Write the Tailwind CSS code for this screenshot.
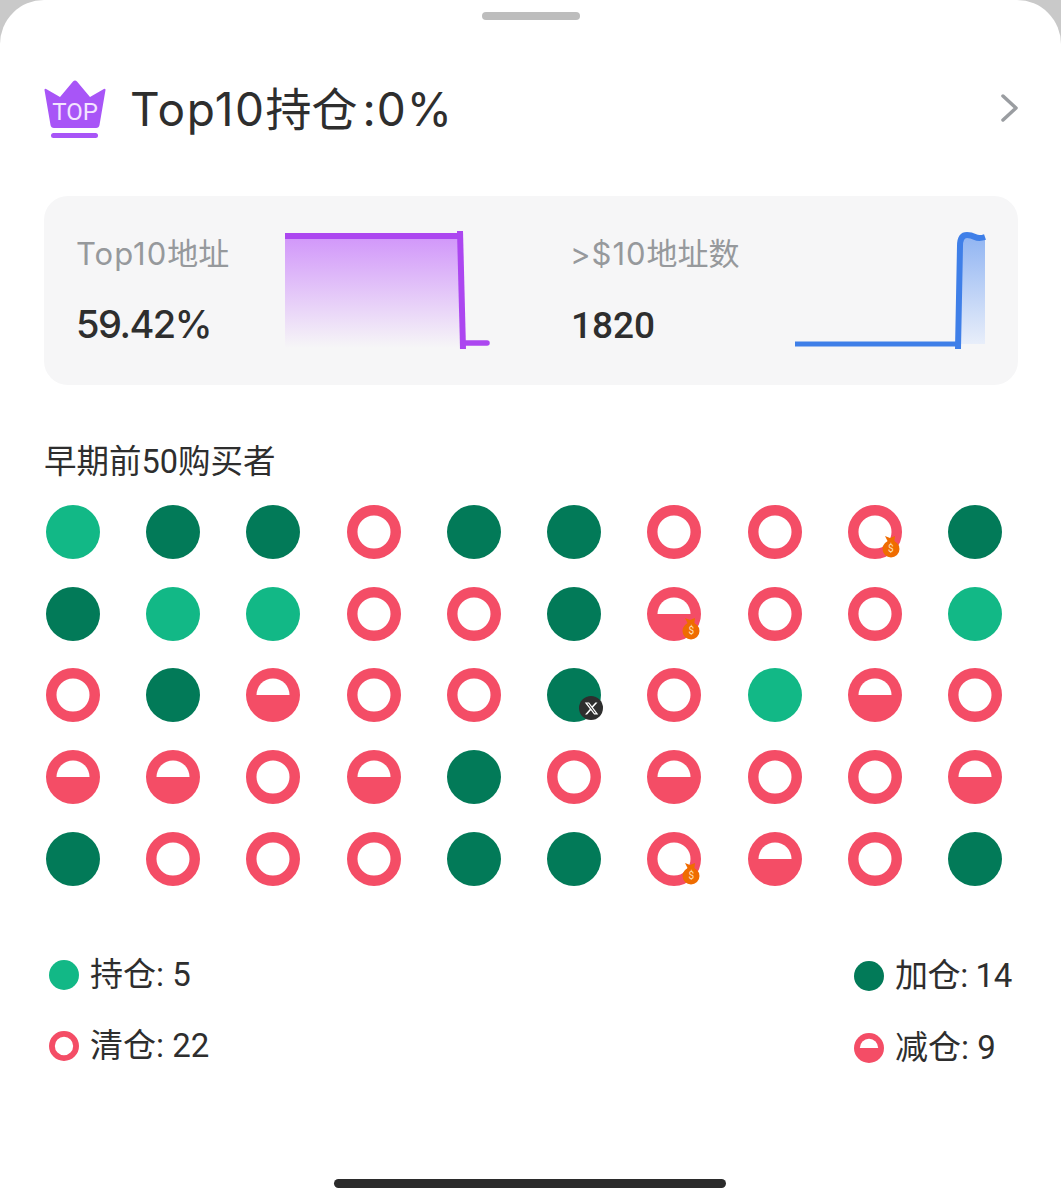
<!DOCTYPE html>
<html lang="zh">
<head>
    <meta charset="UTF-8">
    <meta name="viewport" content="width=device-width, initial-scale=1.0">
    <title>Top10持仓</title>
    <script src="https://cdn.jsdelivr.net/npm/@tailwindcss/browser@4"></script>
</head>
<body class="bg-[#c9c9c9] font-['Roboto','Noto_Sans_CJK_SC',sans-serif] text-[#2e2e2e]">

    <!-- shared dots -->
    <svg class="hidden" xmlns="http://www.w3.org/2000/svg">
        <symbol id="hold" viewBox="0 0 54 54"><circle cx="27" cy="27" r="27" fill="#12b886"/></symbol>
        <symbol id="add" viewBox="0 0 54 54"><circle cx="27" cy="27" r="27" fill="#027a58"/></symbol>
        <symbol id="clear" viewBox="0 0 54 54"><circle cx="27" cy="27" r="21.750" fill="none" stroke="#f44d66" stroke-width="10.500"/></symbol>
        <symbol id="half" viewBox="0 0 54 54"><circle cx="27" cy="27" r="27" fill="#f44d66"/><path d="M10.500 27a16.500 16.500 0 0 1 33 0z" fill="#fff"/></symbol>
        <symbol id="bag" viewBox="0 0 20 24"><path d="M4 1l5 2 5-2-1 8H8z" fill="#ef6c00"/><circle cx="10" cy="14" r="8.5" fill="#ef6c00"/></symbol>
    </svg>

    <div class="relative w-[1061px] h-[1200px] bg-white rounded-t-[44px] overflow-hidden flex flex-col">
        <!-- drag handle -->
        <div class="mt-3 mx-auto w-[98px] h-2 rounded-full bg-[#bdbdbd]"></div>

        <!-- header -->
        <div class="mt-[60px] ml-[44px] mr-[41px] h-[60px] flex items-center">
            <svg class="w-[62px] h-[60px]" viewBox="0 0 62 60" xmlns="http://www.w3.org/2000/svg">
                <path d="M0.500 10 Q0.500 8 3 9.500 L16 17 L29 1.500 Q31 -0.500 33 1.500 L46 17 L59 9.500 Q61.500 8 61.500 10 L55.500 45 Q55 48 52 48 H10 Q7 48 6.500 45 Z" fill="#a855f7"/>
                <rect x="7" y="53" width="47" height="5" rx="2.500" fill="#a855f7"/>
                <text x="31" y="40" text-anchor="middle" font-size="24" fill="#f3e4ff" font-family="Roboto">TOP</text>
            </svg>
            <h1 class="ml-[24px] -mt-[3px] font-['Inter','Noto_Sans_CJK_SC',sans-serif] text-[46px] leading-none text-[#2e2e2e]"><span class="tracking-[1.500px]">Top10</span>持仓<span class="ml-[5px] tracking-[1px]">:0%</span></h1>
            <svg class="ml-auto -mt-1 w-[20px] h-[30px]" viewBox="0 0 20 30" fill="none" xmlns="http://www.w3.org/2000/svg">
                <path d="M3 3l13 12L3 27" stroke="#9a9da1" stroke-width="3.500" stroke-linecap="round" stroke-linejoin="round"/>
            </svg>
        </div>

        <!-- stats card -->
        <div class="mt-[56px] ml-[44px] mr-[43px] h-[189px] bg-[#f6f6f7] rounded-[24px] flex">
            <div class="w-[495px] pl-[32px] flex">
                <div class="w-[209px] pt-[38px]">
                    <div class="font-['Inter','Noto_Sans_CJK_SC',sans-serif] text-[31px] leading-10 text-[#96999c]"><span class="tracking-[1px]">Top10</span>地址</div>
                    <div class="mt-[30px] font-['Inter',sans-serif] text-[38px] leading-10 font-medium tracking-[-1.500px]">59.42%</div>
                </div>
                <svg class="mt-[34px] w-[206px] h-[122px]" viewBox="0 0 206 122" fill="none" xmlns="http://www.w3.org/2000/svg">
                    <defs>
                        <linearGradient id="purple" x1="0" y1="0" x2="0" y2="1">
                            <stop offset="0" stop-color="#d196fa"/>
                            <stop offset="1" stop-color="#f6f6f7"/>
                        </linearGradient>
                        <linearGradient id="blue" x1="0" y1="0" x2="0" y2="1">
                            <stop offset="0" stop-color="#90b4f2"/>
                            <stop offset="1" stop-color="#e8eefa"/>
                        </linearGradient>
                    </defs>
                    <rect x="0" y="6" width="174" height="112" fill="url(#purple)"/>
                    <path d="M0 6H175" stroke="#ac47f0" stroke-width="6"/>
                    <path d="M175 1L178 119" stroke="#ac47f0" stroke-width="6"/>
                    <path d="M178 113H202" stroke="#ac47f0" stroke-width="5.500" stroke-linecap="round"/>
                </svg>
            </div>
            <div class="pl-[33px] flex">
                <div class="w-[223px] pt-[38px]">
                    <div class="-ml-0.5 font-['Inter','Noto_Sans_CJK_SC',sans-serif] text-[31px] leading-10 text-[#96999c]"><span class="tracking-[1px]">&gt;$10</span>地址数</div>
                    <div class="-ml-px mt-[32px] text-[37px] leading-10 font-medium">1820</div>
                </div>
                <svg class="mt-[34px] w-[192px] h-[122px]" viewBox="0 0 192 122" fill="none" xmlns="http://www.w3.org/2000/svg">
                    <path d="M165 8Q172 3 178 6T190 9V114H165Z" fill="url(#blue)"/>
                    <path d="M0 114H162" stroke="#3f7fe8" stroke-width="5"/>
                    <path d="M163 119L165 16Q165 5 172 5Q176 5 180 7T190 7" stroke="#3f7fe8" stroke-width="6"/>
                </svg>
            </div>
        </div>

        <!-- buyers -->
        <h2 class="mt-[57px] ml-[44px] text-[32.500px] leading-10 text-[#2e2e2e]">早期前50购买者</h2>
        <div class="mt-[23px] ml-[46px] w-[956px] flex flex-col gap-[27.700px]">
            <div class="flex justify-between">
                <svg class="w-[54px] h-[54px]"><use href="#hold"/></svg>
                <svg class="w-[54px] h-[54px]"><use href="#add"/></svg>
                <svg class="w-[54px] h-[54px]"><use href="#add"/></svg>
                <svg class="w-[54px] h-[54px]"><use href="#clear"/></svg>
                <svg class="w-[54px] h-[54px]"><use href="#add"/></svg>
                <svg class="w-[54px] h-[54px]"><use href="#add"/></svg>
                <svg class="w-[54px] h-[54px]"><use href="#clear"/></svg>
                <svg class="w-[54px] h-[54px]"><use href="#clear"/></svg>
                <div class="relative w-[54px] h-[54px]">
                    <svg class="w-[54px] h-[54px]"><use href="#clear"/></svg>
                    <svg class="absolute left-[33px] top-[30px] w-[20px] h-[24px]"><use href="#bag"/></svg>
                    <span class="absolute left-[33px] top-[38px] w-[20px] text-center text-[10px] leading-[12px] text-[#ffe0b8]">$</span>
                </div>
                <svg class="w-[54px] h-[54px]"><use href="#add"/></svg>
            </div>
            <div class="flex justify-between">
                <svg class="w-[54px] h-[54px]"><use href="#add"/></svg>
                <svg class="w-[54px] h-[54px]"><use href="#hold"/></svg>
                <svg class="w-[54px] h-[54px]"><use href="#hold"/></svg>
                <svg class="w-[54px] h-[54px]"><use href="#clear"/></svg>
                <svg class="w-[54px] h-[54px]"><use href="#clear"/></svg>
                <svg class="w-[54px] h-[54px]"><use href="#add"/></svg>
                <div class="relative w-[54px] h-[54px]">
                    <svg class="w-[54px] h-[54px]"><use href="#half"/></svg>
                    <svg class="absolute left-[34px] top-[30px] w-[20px] h-[24px]"><use href="#bag"/></svg>
                    <span class="absolute left-[34px] top-[38px] w-[20px] text-center text-[10px] leading-[12px] text-[#ffe0b8]">$</span>
                </div>
                <svg class="w-[54px] h-[54px]"><use href="#clear"/></svg>
                <svg class="w-[54px] h-[54px]"><use href="#clear"/></svg>
                <svg class="w-[54px] h-[54px]"><use href="#hold"/></svg>
            </div>
            <div class="flex justify-between">
                <svg class="w-[54px] h-[54px]"><use href="#clear"/></svg>
                <svg class="w-[54px] h-[54px]"><use href="#add"/></svg>
                <svg class="w-[54px] h-[54px]"><use href="#half"/></svg>
                <svg class="w-[54px] h-[54px]"><use href="#clear"/></svg>
                <svg class="w-[54px] h-[54px]"><use href="#clear"/></svg>
                <div class="relative w-[54px] h-[54px]">
                    <svg class="w-[54px] h-[54px]"><use href="#add"/></svg>
                    <div class="absolute left-[32px] top-[28px] w-[24px] h-[24px] rounded-full bg-[#2e2e2e] flex items-center justify-center">
                        <svg class="w-[15px] h-[15px]" viewBox="0 0 24 24" xmlns="http://www.w3.org/2000/svg">
                            <path d="M18.244 2.250h3.308l-7.227 8.260 8.502 11.240H16.170l-5.214-6.817L4.990 21.750H1.680l7.730-8.835L1.254 2.250H8.080l4.713 6.231zm-1.161 17.520h1.833L7.084 4.126H5.117z" fill="#fff"/>
                        </svg>
                    </div>
                </div>
                <svg class="w-[54px] h-[54px]"><use href="#clear"/></svg>
                <svg class="w-[54px] h-[54px]"><use href="#hold"/></svg>
                <svg class="w-[54px] h-[54px]"><use href="#half"/></svg>
                <svg class="w-[54px] h-[54px]"><use href="#clear"/></svg>
            </div>
            <div class="flex justify-between">
                <svg class="w-[54px] h-[54px]"><use href="#half"/></svg>
                <svg class="w-[54px] h-[54px]"><use href="#half"/></svg>
                <svg class="w-[54px] h-[54px]"><use href="#clear"/></svg>
                <svg class="w-[54px] h-[54px]"><use href="#half"/></svg>
                <svg class="w-[54px] h-[54px]"><use href="#add"/></svg>
                <svg class="w-[54px] h-[54px]"><use href="#clear"/></svg>
                <svg class="w-[54px] h-[54px]"><use href="#half"/></svg>
                <svg class="w-[54px] h-[54px]"><use href="#clear"/></svg>
                <svg class="w-[54px] h-[54px]"><use href="#clear"/></svg>
                <svg class="w-[54px] h-[54px]"><use href="#half"/></svg>
            </div>
            <div class="flex justify-between">
                <svg class="w-[54px] h-[54px]"><use href="#add"/></svg>
                <svg class="w-[54px] h-[54px]"><use href="#clear"/></svg>
                <svg class="w-[54px] h-[54px]"><use href="#clear"/></svg>
                <svg class="w-[54px] h-[54px]"><use href="#clear"/></svg>
                <svg class="w-[54px] h-[54px]"><use href="#add"/></svg>
                <svg class="w-[54px] h-[54px]"><use href="#add"/></svg>
                <div class="relative w-[54px] h-[54px]">
                    <svg class="w-[54px] h-[54px]"><use href="#clear"/></svg>
                    <svg class="absolute left-[34px] top-[30px] w-[20px] h-[24px]"><use href="#bag"/></svg>
                    <span class="absolute left-[34px] top-[38px] w-[20px] text-center text-[10px] leading-[12px] text-[#ffe0b8]">$</span>
                </div>
                <svg class="w-[54px] h-[54px]"><use href="#half"/></svg>
                <svg class="w-[54px] h-[54px]"><use href="#clear"/></svg>
                <svg class="w-[54px] h-[54px]"><use href="#add"/></svg>
            </div>
        </div>

        <!-- legend -->
        <div class="mt-[69px] ml-[49px] mr-[50px] flex justify-between text-[33px] leading-10">
            <div class="flex flex-col gap-[31px]">
                <div class="flex items-center gap-[11px]"><svg class="w-[30px] h-[30px] shrink-0"><use href="#hold"/></svg><span>持仓: 5</span></div>
                <div class="flex items-center gap-[11px]"><svg class="w-[30px] h-[30px] shrink-0"><use href="#clear"/></svg><span>清仓: 22</span></div>
            </div>
            <div class="w-[157px] mt-px flex flex-col gap-[32px]">
                <div class="flex items-center gap-[11px] whitespace-nowrap"><svg class="w-[30px] h-[30px] shrink-0"><use href="#add"/></svg><span class="tracking-[-0.400px]">加仓: 14</span></div>
                <div class="flex items-center gap-[11px] whitespace-nowrap"><svg class="w-[30px] h-[30px] shrink-0"><use href="#half"/></svg><span>减仓: 9</span></div>
            </div>
        </div>

        <!-- home indicator -->
        <div class="absolute bottom-[12px] left-[334px] w-[392px] h-[9px] rounded-full bg-[#2b2b2b]"></div>
    </div>
</body>
</html>
